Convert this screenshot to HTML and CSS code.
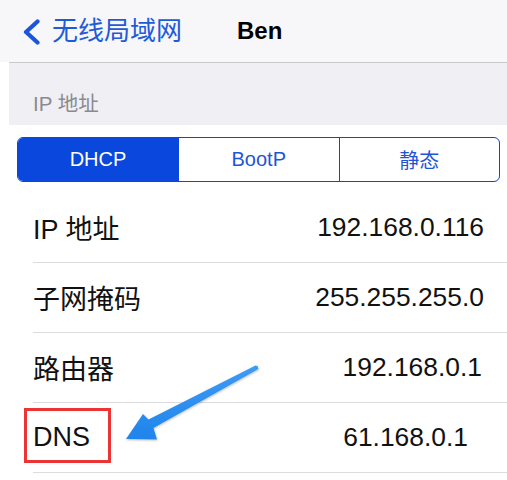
FILE: index.html
```html
<!DOCTYPE html>
<html>
<head>
<meta charset="utf-8">
<link rel="stylesheet" href="styles.css">
</head>
<body>
<div class="nav">
  <div class="back">
    <svg class="chev" width="20" height="26" viewBox="0 0 20 26"><polyline points="16.5,2.5 5,13 16.5,23.5" fill="none" stroke="#1c55d9" stroke-width="4.2" stroke-linecap="round" stroke-linejoin="round"/></svg>
    <span class="back-label">无线局域网</span>
  </div>
  <div class="title">Ben</div>
</div>
<div class="content">
  <div class="section-header">IP 地址</div>
  <div class="seg-wrap">
    <div class="seg">
      <div class="seg-item active">DHCP</div>
      <div class="seg-item">BootP</div>
      <div class="seg-item">静态</div>
    </div>
  </div>
  <div class="list">
    <div class="row"><span class="label">IP 地址</span><span class="value">192.168.0.116</span></div>
    <div class="row"><span class="label">子网掩码</span><span class="value">255.255.255.0</span></div>
    <div class="row"><span class="label">路由器</span><span class="value v-router">192.168.0.1</span></div>
    <div class="row row-dns"><span class="label">DNS</span><span class="value v-dns">61.168.0.1</span><div class="highlight"></div></div>
  </div>
  <svg class="arrow" width="160" height="100" viewBox="110 355 160 100">
    <defs>
      <linearGradient id="ag" x1="0" y1="0" x2="0" y2="1">
        <stop offset="0" stop-color="#3d9bf5"/>
        <stop offset="1" stop-color="#1f84ec"/>
      </linearGradient>
      <filter id="sh" x="-20%" y="-20%" width="140%" height="140%">
        <feDropShadow dx="0.5" dy="1" stdDeviation="0.8" flood-color="#000" flood-opacity="0.25"/>
      </filter>
    </defs>
    <polygon filter="url(#sh)" fill="url(#ag)" points="126,439 143,414 148.5,419.5 255.5,365.5 257.5,366 258.5,369 153.5,428 157,439.5"/>
  </svg>
</div>
</body>
</html>
```
FILE: styles.css
```css
html, body {
  margin: 0;
  padding: 0;
  background: #ffffff;
}
body {
  font-family: "Liberation Sans", "Noto Sans CJK SC", sans-serif;
  width: 507px;
  height: 480px;
  overflow: hidden;
  position: relative;
}
.nav {
  height: 62px;
  background: #f7f7f9;
  display: flex;
  align-items: center;
}
.back {
  display: flex;
  align-items: center;
  margin-left: 21px;
}
.chev {
  display: block;
  margin-top: 1px;
}
.back-label {
  color: #1f5ad8;
  font-size: 26px;
  margin-left: 11px;
  line-height: 30px;
}
.title {
  margin-left: 55px;
  font-weight: bold;
  font-size: 24px;
  color: #000;
}
.content {
  margin-left: 9px;
  border-top: 1px solid #c9c9cd;
  position: relative;
}
.section-header {
  height: 62px;
  background: #efeff4;
  color: #8a8a8f;
  font-size: 20.5px;
  display: flex;
  align-items: center;
  padding-left: 24px;
  padding-top: 15px;
  box-sizing: border-box;
}
.seg-wrap {
  padding: 12px 7px 0 8px;
}
.seg {
  display: flex;
  height: 45px;
  border: 1.5px solid #0a47dc;
  border-radius: 6px;
  overflow: hidden;
  box-sizing: border-box;
}
.seg-item {
  flex: 1;
  display: flex;
  align-items: center;
  justify-content: center;
  color: #1e55d6;
  font-size: 20px;
  border-left: 1.5px solid #0a47dc;
}
.seg-item:first-child {
  border-left: none;
}
.seg-item.active {
  background: #0a47dc;
  color: #ffffff;
  flex: 0 0 160px;
}
.list {
  margin-top: 11px;
  margin-left: 24px;
}
.row {
  height: 69px;
  border-bottom: 1px solid #dcdce0;
  display: flex;
  align-items: center;
  justify-content: space-between;
  padding-right: 23px;
  position: relative;
  color: #111;
}
.label {
  font-size: 27px;
}
.value {
  font-size: 26.4px;
}
.v-router {
  margin-right: 2px;
}
.v-dns {
  margin-right: 16px;
}
.highlight {
  position: absolute;
  left: -9px;
  top: 5px;
  width: 87px;
  height: 55px;
  border: 3px solid #ec3434;
  box-sizing: border-box;
}
.arrow {
  position: absolute;
  left: 101px;
  top: 292px;
}
```
